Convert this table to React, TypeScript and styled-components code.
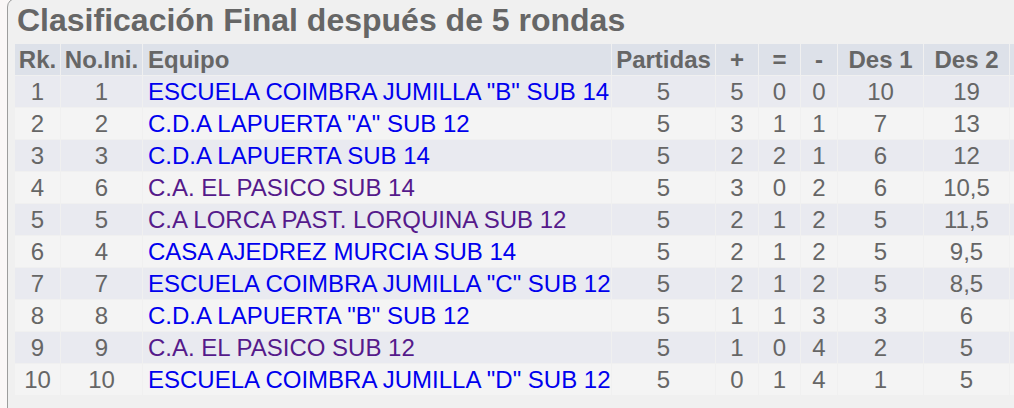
import React from 'react';
import styled, { createGlobalStyle } from 'styled-components';

const GlobalStyle = createGlobalStyle`
  html, body {
    margin: 0;
    padding: 0;
    background: #faf7f7;
    overflow: hidden;
    font-family: "Liberation Sans", Arial, sans-serif;
  }
`;

const SPage = styled.div`
  width: 1014px;
  height: 408px;
  overflow: hidden;
`;

const SPanel = styled.section`
  margin: -2px 0 0 7px;
  width: 1120px;
  height: 430px;
  box-sizing: border-box;
  background: #f0f0f0;
  border: 1px solid #9d9d9d;
  border-radius: 9px 0 0 0;
  padding: 0 0 0 6px;
`;

const STitle = styled.h2`
  margin: 0;
  padding: 4px 0 0 3px;
  height: 44px;
  box-sizing: border-box;
  font-size: 32px;
  font-weight: bold;
  color: #666;
  line-height: 34px;
  white-space: nowrap;
`;

const STable = styled.table`
  border-collapse: separate;
  border-spacing: 1px;
  table-layout: fixed;
  margin: 0;
`;

const SHead = styled.th<{ $w: number; $left?: boolean }>`
  width: ${(p) => p.$w}px;
  height: 31px;
  padding: ${(p) => (p.$left ? '0 0 0 5px' : '0')};
  box-sizing: border-box;
  background: #dde1e9;
  color: #666;
  font-size: 24px;
  font-weight: bold;
  line-height: 31px;
  text-align: ${(p) => (p.$left ? 'left' : 'center')};
  white-space: nowrap;
`;

const SRow = styled.tr<{ $odd: boolean }>`
  background: ${(p) => (p.$odd ? '#e9eaf0' : '#f4f4f4')};
`;

const SCell = styled.td<{ $left?: boolean }>`
  height: 31px;
  padding: ${(p) => (p.$left ? '0 0 0 5px' : '0')};
  box-sizing: border-box;
  color: #666;
  font-size: 24px;
  line-height: 31px;
  text-align: ${(p) => (p.$left ? 'left' : 'center')};
  white-space: nowrap;
  overflow: hidden;
`;

const STeam = styled.a<{ $visited: boolean }>`
  color: ${(p) => (p.$visited ? '#551a8b' : '#0000ee')};
  text-decoration: none;
`;

const cols: { label: string; w: number; left?: boolean }[] = [
  { label: 'Rk.', w: 45 },
  { label: 'No.Ini.', w: 81 },
  { label: 'Equipo', w: 468, left: true },
  { label: 'Partidas', w: 103 },
  { label: '+', w: 42 },
  { label: '=', w: 41 },
  { label: '-', w: 36 },
  { label: 'Des 1', w: 85 },
  { label: 'Des 2', w: 85 },
  { label: '', w: 85 },
];

type Team = [number, number, string, boolean, number, number, number, number, string, string];

const rows: Team[] = [
  [1, 1, 'ESCUELA COIMBRA JUMILLA "B" SUB 14', false, 5, 5, 0, 0, '10', '19'],
  [2, 2, 'C.D.A LAPUERTA "A" SUB 12', false, 5, 3, 1, 1, '7', '13'],
  [3, 3, 'C.D.A LAPUERTA SUB 14', false, 5, 2, 2, 1, '6', '12'],
  [4, 6, 'C.A. EL PASICO SUB 14', true, 5, 3, 0, 2, '6', '10,5'],
  [5, 5, 'C.A LORCA PAST. LORQUINA SUB 12', true, 5, 2, 1, 2, '5', '11,5'],
  [6, 4, 'CASA AJEDREZ MURCIA SUB 14', false, 5, 2, 1, 2, '5', '9,5'],
  [7, 7, 'ESCUELA COIMBRA JUMILLA "C" SUB 12', false, 5, 2, 1, 2, '5', '8,5'],
  [8, 8, 'C.D.A LAPUERTA "B" SUB 12', false, 5, 1, 1, 3, '3', '6'],
  [9, 9, 'C.A. EL PASICO SUB 12', true, 5, 1, 0, 4, '2', '5'],
  [10, 10, 'ESCUELA COIMBRA JUMILLA "D" SUB 12', false, 5, 0, 1, 4, '1', '5'],
];

const App: React.FC = () => (
  <SPage>
    <GlobalStyle />
    <SPanel>
      <STitle>Clasificación Final después de 5 rondas</STitle>
      <STable>
        <thead>
          <tr>
            {cols.map((c, i) => (
              <SHead key={i} $w={c.w} $left={c.left}>
                {c.label}
              </SHead>
            ))}
          </tr>
        </thead>
        <tbody>
          {rows.map((r, i) => (
            <SRow key={r[0]} $odd={i % 2 === 0}>
              <SCell>{r[0]}</SCell>
              <SCell>{r[1]}</SCell>
              <SCell $left>
                <STeam href="#" $visited={r[3]}>
                  {r[2]}
                </STeam>
              </SCell>
              <SCell>{r[4]}</SCell>
              <SCell>{r[5]}</SCell>
              <SCell>{r[6]}</SCell>
              <SCell>{r[7]}</SCell>
              <SCell>{r[8]}</SCell>
              <SCell>{r[9]}</SCell>
              <SCell />
            </SRow>
          ))}
        </tbody>
      </STable>
    </SPanel>
  </SPage>
);

export default App;
